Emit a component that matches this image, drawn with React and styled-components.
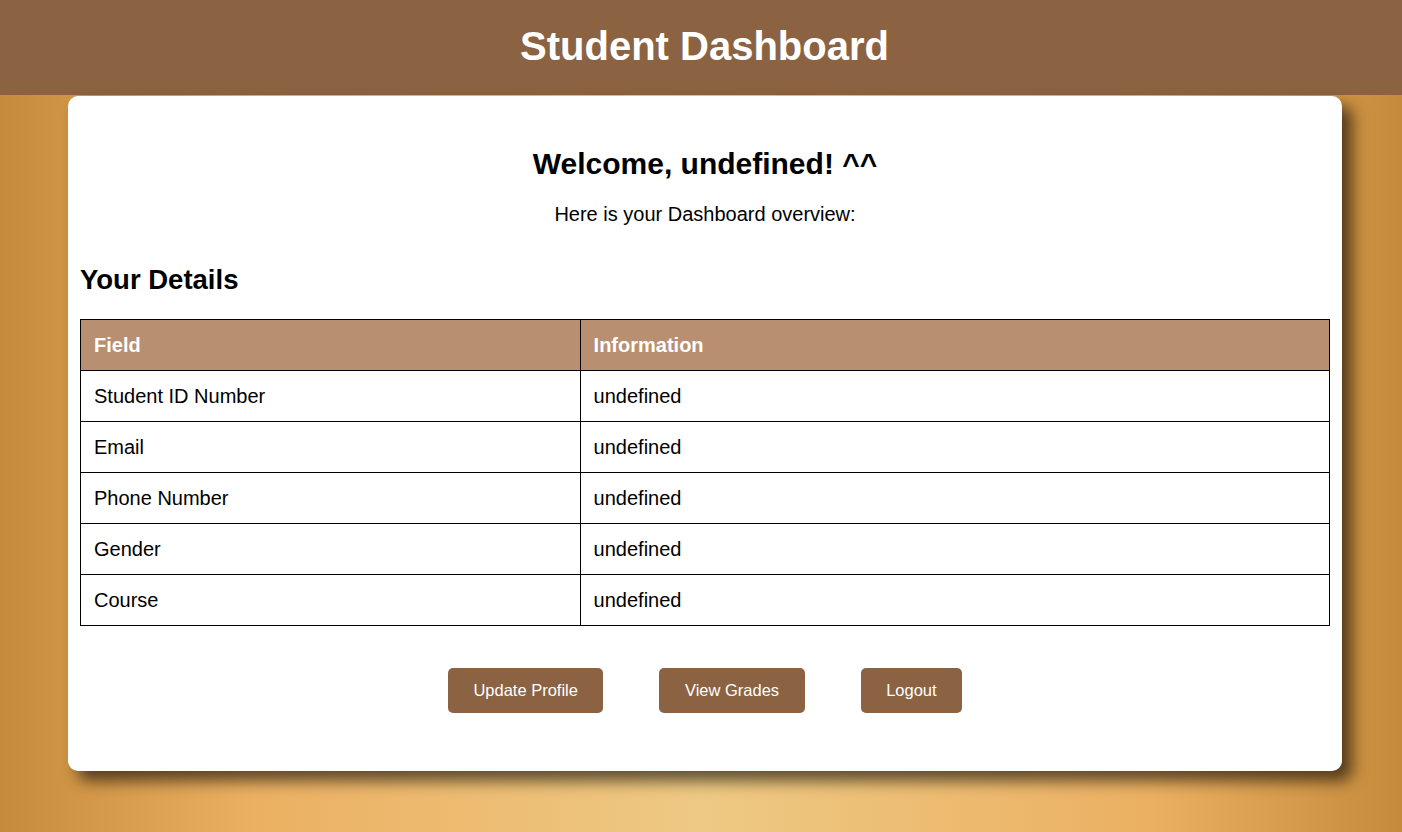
import React from 'react'
import styled, { createGlobalStyle } from 'styled-components'

const GlobalStyle = createGlobalStyle`
  html, body {
    margin: 0;
    min-height: 100%;
  }
  body {
    font-family: "Liberation Sans", Arial, sans-serif;
    color: #000;
    background: linear-gradient(to right, #c58a3a 0%, #ebb062 18%, #eec983 50%, #ebb062 82%, #c58a3a 100%);
    min-height: 100vh;
  }
`

const Header = styled.header`
  height: 95px;
  background: #8b6342;
  display: flex;
  align-items: center;
  justify-content: center;
  padding-left: 7px;
  padding-bottom: 2px;
  box-sizing: border-box;
`

const Title = styled.h1`
  margin: 0;
  color: #fff;
  font-size: 40px;
  font-weight: bold;
`

const Main = styled.main`
  padding: 1px 60px 60px 68px;
`

const Card = styled.section`
  background: #fff;
  border-radius: 10px;
  box-shadow: 10px 10px 15px rgba(0, 0, 0, 0.6);
  padding: 51px 12px 58px;
`

const Welcome = styled.h2`
  margin: 0;
  text-align: center;
  font-size: 30px;
  line-height: 34.5px;
`

const Intro = styled.p`
  margin: 21px 0 0;
  text-align: center;
  font-size: 20px;
  line-height: 23px;
`

const SectionTitle = styled.h2`
  margin: 38px 0 24px;
  font-size: 27.5px;
  line-height: 31px;
`

const Table = styled.table`
  width: 100%;
  border-collapse: collapse;
  font-size: 20px;
`

const Cell = styled.td`
  border: 1px solid #000;
  padding: 13px;
  line-height: 24px;
  text-align: left;
  width: ${p => p.$w || 'auto'};
`

const HeadCell = styled(Cell).attrs({ as: 'th' })`
  background: #b88f71;
  color: #fff;
  font-weight: bold;
`

const Actions = styled.div`
  display: flex;
  justify-content: center;
  gap: 56px;
  margin-top: 42px;
`

const Button = styled.button`
  background: #8b6342;
  color: #fff;
  border: none;
  border-radius: 5px;
  padding: 13px 25.5px;
  font-family: "Liberation Sans", Arial, sans-serif;
  font-size: 16.5px;
  line-height: 19px;
  cursor: pointer;
`

const details = [
  ['Student ID Number', undefined],
  ['Email', undefined],
  ['Phone Number', undefined],
  ['Gender', undefined],
  ['Course', undefined],
]

export default function App() {
  const name = undefined
  return (
    <>
      <GlobalStyle />
      <Header>
        <Title>Student Dashboard</Title>
      </Header>
      <Main>
        <Card>
          <Welcome>Welcome, {String(name)}! ^^</Welcome>
          <Intro>Here is your Dashboard overview:</Intro>
          <SectionTitle>Your Details</SectionTitle>
          <Table>
            <thead>
              <tr>
                <HeadCell $w="40%">Field</HeadCell>
                <HeadCell>Information</HeadCell>
              </tr>
            </thead>
            <tbody>
              {details.map(([field, value]) => (
                <tr key={field}>
                  <Cell>{field}</Cell>
                  <Cell>{String(value)}</Cell>
                </tr>
              ))}
            </tbody>
          </Table>
          <Actions>
            <Button>Update Profile</Button>
            <Button>View Grades</Button>
            <Button>Logout</Button>
          </Actions>
        </Card>
      </Main>
    </>
  )
}
